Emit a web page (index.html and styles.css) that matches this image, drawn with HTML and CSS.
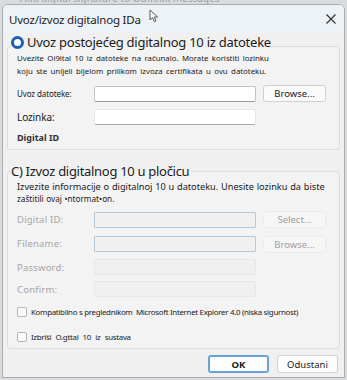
FILE: index.html
```html
<!DOCTYPE html>
<html lang="hr">
<head>
    <meta charset="UTF-8">
    <meta name="viewport" content="width=device-width, initial-scale=1.0">
    <title>Uvoz/izvoz digitalnog IDa</title>
    <link rel="stylesheet" href="styles.css">
</head>
<body>

    <div class="behind">
        <span class="behind-text">Add digital signature to Outlook messages</span>
    </div>

    <div class="dialog">
        <div class="titlebar">
            <span class="title">Uvoz/izvoz digitalnog IDa</span>
            <svg class="cursor" width="10" height="14" viewBox="0 0 10 14">
                <path d="M1 1 L1 11 L3.5 8.6 L5.4 12.6 L7 11.9 L5.2 8 L8.6 8 Z" fill="#fff" stroke="#555" stroke-width="1"/>
            </svg>
            <svg class="close" width="12" height="12" viewBox="0 0 12 12">
                <path d="M1.5 1.5 L10.5 10.5 M10.5 1.5 L1.5 10.5" stroke="#333" stroke-width="1.2"/>
            </svg>
        </div>

        <form class="content">
            <fieldset class="group group-import">
                <legend class="legend-radio">
                    <span class="radio"></span>
                    <span>Uvoz postoje&#263;eg digitalnog 10 iz datoteke</span>
                </legend>
                <p class="desc">Uvezite Oi9ital 10 iz datoteke na ra&#269;unalo. Morate koristiti lozinku<br>koju ste unijeli bijelom prilikom izvoza certifikata u ovu datoteku.</p>

                <div class="row">
                    <label class="lbl" for="importFile">Uvoz datoteke:</label>
                    <input class="field" type="text" id="importFile">
                    <button type="button" class="btn">Browse...</button>
                </div>
                <div class="row row-tight">
                    <label class="lbl lbl-big" for="importPass">Lozinka:</label>
                    <input class="field field-flat" type="password" id="importPass">
                </div>
                <div class="digital-id">Digital ID</div>
            </fieldset>

            <fieldset class="group group-export">
                <legend class="legend-plain">C) Izvoz digitalnog 10 u plo&#269;icu</legend>
                <p class="desc desc-export">Izvezite informacije o digitalnoj 10 u datoteku. Unesite lozinku da biste<br><span class="small">za&#353;titili ovaj &bull;ntormat&bull;on.</span></p>

                <div class="row off">
                    <label class="lbl">Digital ID:</label>
                    <input class="field field-blue" type="text" disabled>
                    <button type="button" class="btn" disabled>Select...</button>
                </div>
                <div class="row off">
                    <label class="lbl">Filename:</label>
                    <input class="field field-blue" type="text" disabled>
                    <button type="button" class="btn btn-low" disabled>Browse...</button>
                </div>
                <div class="row off">
                    <label class="lbl">Password:</label>
                    <input class="field field-faint" type="password" disabled>
                </div>
                <div class="row off row-confirm">
                    <label class="lbl">Confirm:</label>
                    <input class="field field-faint" type="password" disabled>
                </div>

                <label class="check check-first">
                    <span class="box"></span>
                    <span>Kompatibilno s preglednikom &nbsp;Microsoft Internet Explorer 4.0 (niska sigurnost)</span>
                </label>
                <label class="check check-wide">
                    <span class="box"></span>
                    <span>Izbri&#353;i O.gttal 10 iz sustava</span>
                </label>
            </fieldset>

            <div class="footer">
                <button type="button" class="btn-main btn-ok">OK</button>
                <button type="button" class="btn-main">Odustani</button>
            </div>
        </form>
    </div>

</body>
</html>
```

FILE: styles.css
```css
    body {
        margin: 0;
        width: 347px;
        height: 380px;
        overflow: hidden;
        background: #d9dbdd;
        font-family: "Noto Sans", "Open Sans", Arial, sans-serif;
        color: #1a1a1a;
    }

    .behind {
        height: 4px;
        overflow: hidden;
        padding-left: 20px;
    }

    .behind-text {
        display: block;
        margin-top: -7px;
        font-size: 10px;
        line-height: 10px;
        color: #9aa3ad;
        filter: blur(0.6px);
    }

    .dialog {
        margin: 0 2px;
        height: 372px;
        background: #f0f0f0;
        border: 1px solid #a9abae;
        border-radius: 6px 6px 0 0;
        overflow: hidden;
    }

    .titlebar {
        height: 28px;
        background: #edf2f6;
        display: flex;
        align-items: center;
        padding: 0 6px 0 6px;
    }

    .title {
        font-size: 11.5px;
        letter-spacing: -0.2px;
        color: #1b1b1b;
        width: 140px;
    }

    .cursor {
        margin-top: -6px;
    }

    .close {
        margin-left: auto;
        margin-right: 1px;
    }

    .content {
        padding: 0 4px;
    }

    .group {
        margin: 0;
        border: 1px solid #dcdcdc;
        border-radius: 3px;
        background: #f3f3f3;
        padding: 0 0 0 9px;
        min-width: 0;
    }

    .group-import {
        margin-top: 2px;
        padding-bottom: 5px;
    }

    .legend-radio {
        display: flex;
        align-items: center;
        padding: 0 0 8px 0;
        margin-left: -6px;
        font-size: 13px;
        line-height: 14px;
        letter-spacing: -0.25px;
        color: #1b1b1b;
    }

    .radio {
        width: 7px;
        height: 7px;
        border: 3px solid #1a5fb4;
        border-radius: 50%;
        background: #fff;
        margin-right: 3px;
    }

    .desc {
        margin: -5px 0 0 0;
        font-size: 7.8px;
        line-height: 13px;
        word-spacing: 1.4px;
        color: #1a1a1a;
    }

    .row {
        display: flex;
        align-items: center;
        margin-top: 7px;
    }

    .row-tight {
        margin-top: 7px;
    }

    .lbl {
        width: 77px;
        font-size: 8px;
        letter-spacing: -0.1px;
        color: #1a1a1a;
    }

    .lbl-big {
        font-size: 10px;
    }

    .field {
        width: 162px;
        height: 16px;
        box-sizing: border-box;
        border: 1px solid #c4c4c4;
        border-bottom-color: #9a9a9a;
        border-radius: 2px;
        background: #fff;
        padding: 0;
    }

    .field-flat {
        border-color: #e6e6e6;
        border-bottom-color: #a8a8a8;
    }

    .btn {
        width: 63px;
        height: 17px;
        margin-left: 7px;
        box-sizing: border-box;
        border: 1px solid #d0d0d0;
        border-radius: 3px;
        background: #fbfbfb;
        font-family: "Noto Sans", Arial, sans-serif;
        font-size: 9.5px;
        color: #1a1a1a;
        padding: 0;
    }

    .digital-id {
        margin-top: 7px;
        font-size: 9px;
        line-height: 12px;
        font-weight: bold;
        color: #333;
    }

    .group-export {
        margin-top: 13px;
        padding-bottom: 5px;
    }

    .legend-plain {
        margin-left: -6px;
        padding: 0 2px 0 0;
        font-size: 13px;
        line-height: 16px;
        letter-spacing: -0.3px;
        color: #1b1b1b;
    }

    .desc-export {
        margin-top: 2px;
        font-size: 9.2px;
        line-height: 12px;
        word-spacing: 0.4px;
    }

    .small {
        font-size: 8.2px;
    }

    .off .lbl {
        color: #a6a6a6;
        font-size: 9.5px;
        letter-spacing: 0.2px;
    }

    .row.off {
        margin-top: 6px;
    }

    .off .btn {
        color: #a0a0a0;
        border-color: #ebebeb;
        background: #f6f6f6;
    }

    .field-blue {
        background: #f0f0f0;
        border: 1px solid #b9c6d3;
        border-radius: 1px;
    }

    .btn-low {
        margin-top: 2px;
    }

    .field-faint {
        background: #f0f0f0;
        border: 1px solid #e6e6e6;
    }

    .row-confirm {
        margin-top: 10px;
    }

    .check {
        display: flex;
        align-items: center;
        height: 12px;
        margin-top: 13px;
        white-space: nowrap;
        font-size: 7.9px;
        letter-spacing: -0.3px;
        color: #1a1a1a;
    }

    .check-first {
        margin-top: 9px;
    }

    .check-wide {
        word-spacing: 2.5px;
    }

    .box {
        flex: none;
        width: 10px;
        height: 10px;
        box-sizing: border-box;
        border: 1px solid #b5b5b5;
        border-radius: 2px;
        background: #fafafa;
        margin-right: 4px;
    }

    .footer {
        display: flex;
        justify-content: flex-end;
        gap: 8px;
        margin-top: 6px;
        padding-right: 2px;
    }

    .btn-main {
        width: 61px;
        height: 18px;
        box-sizing: border-box;
        border: 1px solid #d0d0d0;
        border-radius: 3px;
        background: #fdfdfd;
        font-family: "Noto Sans", Arial, sans-serif;
        font-size: 9.5px;
        color: #1a1a1a;
        padding: 0;
    }

    .btn-ok {
        border: 2px solid #6aa3d8;
        font-weight: bold;
    }
```
